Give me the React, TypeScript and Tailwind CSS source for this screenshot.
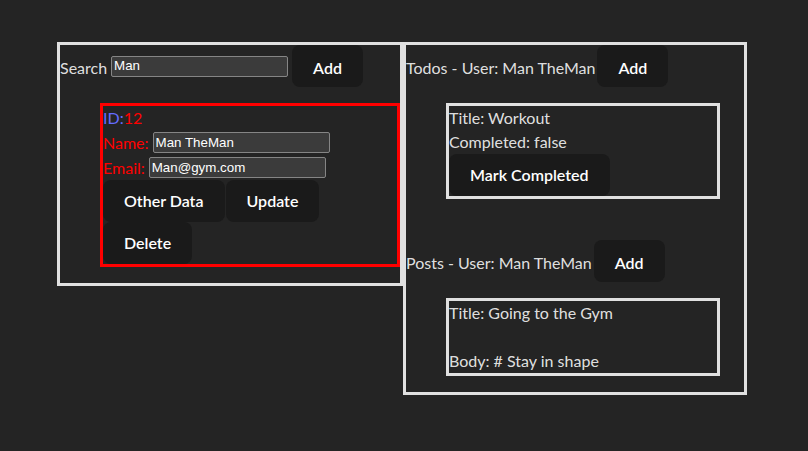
import { useState } from "react"

const btn =
  "h-[42px] shrink-0 rounded-lg border border-transparent bg-[#1a1a1a] px-5 text-base font-semibold text-white"

const field =
  "h-[21px] w-[177px] rounded-[2px] border border-[#858585] bg-[#3b3b3b] px-[2px] font-['Liberation_Sans',Arial,sans-serif] text-[13.33px] text-white outline-none"

export default function App() {
  const [search, setSearch] = useState("Man")
  const [name, setName] = useState("Man TheMan")
  const [email, setEmail] = useState("Man@gym.com")

  return (
    <div className="min-h-[451px] bg-[#242424] pl-[57px] pt-[42px] font-['Lato','Open_Sans',sans-serif] text-base leading-6 text-white/[0.87]">
      <div className="flex items-start">
        {/* Users */}
        <div className="w-[346px] border-[3px] border-[#e0e0e0]">
          <div className="flex items-center gap-1">
            <span className="pt-1">Search</span>
            <input className={field} value={search} onChange={(e) => setSearch(e.target.value)} />
            <button className={btn + " pt-[3px]"}>Add</button>
          </div>

          <div className="mb-4 ml-10 mt-4 border-[3px] border-[#ff0000]">
            <div className="h-6">
              <span className="text-[#646cff]">ID:</span>
              <span className="text-[#ff0000]">12</span>
            </div>
            <div className="flex h-[25px] items-center gap-1 text-[#ff0000]">
              <span>Name:</span>
              <input className={field} value={name} onChange={(e) => setName(e.target.value)} />
            </div>
            <div className="flex h-[25px] items-center gap-1 text-[#ff0000]">
              <span>Email:</span>
              <input className={field} value={email} onChange={(e) => setEmail(e.target.value)} />
            </div>
            <div className="flex flex-wrap gap-x-px">
              <button className={btn}>Other Data</button>
              <button className={btn}>Update</button>
              <button className={btn}>Delete</button>
            </div>
          </div>
        </div>

        {/* Todos & posts */}
        <div className="w-[344px] border-[3px] border-[#e0e0e0]">
          <div className="flex items-center gap-[2px]">
            <span className="pt-1">Todos - User: Man TheMan</span>
            <button className={btn + " pt-[3px]"}>Add</button>
          </div>

          <div className="ml-10 mt-4 w-[274px] border-[3px] border-[#e0e0e0]">
            <div>Title: Workout</div>
            <div>Completed: false</div>
            <button className={btn}>Mark Completed</button>
          </div>

          <div className="mt-[41px] flex items-center gap-[2px]">
            <span className="pt-1">Posts - User: Man TheMan</span>
            <button className={btn + " pt-[3px]"}>Add</button>
          </div>

          <div className="mb-4 ml-10 mt-4 w-[274px] border-[3px] border-[#e0e0e0]">
            <div>Title: Going to the Gym</div>
            <div className="h-6" />
            <div>Body: # Stay in shape</div>
          </div>
        </div>
      </div>
    </div>
  )
}
